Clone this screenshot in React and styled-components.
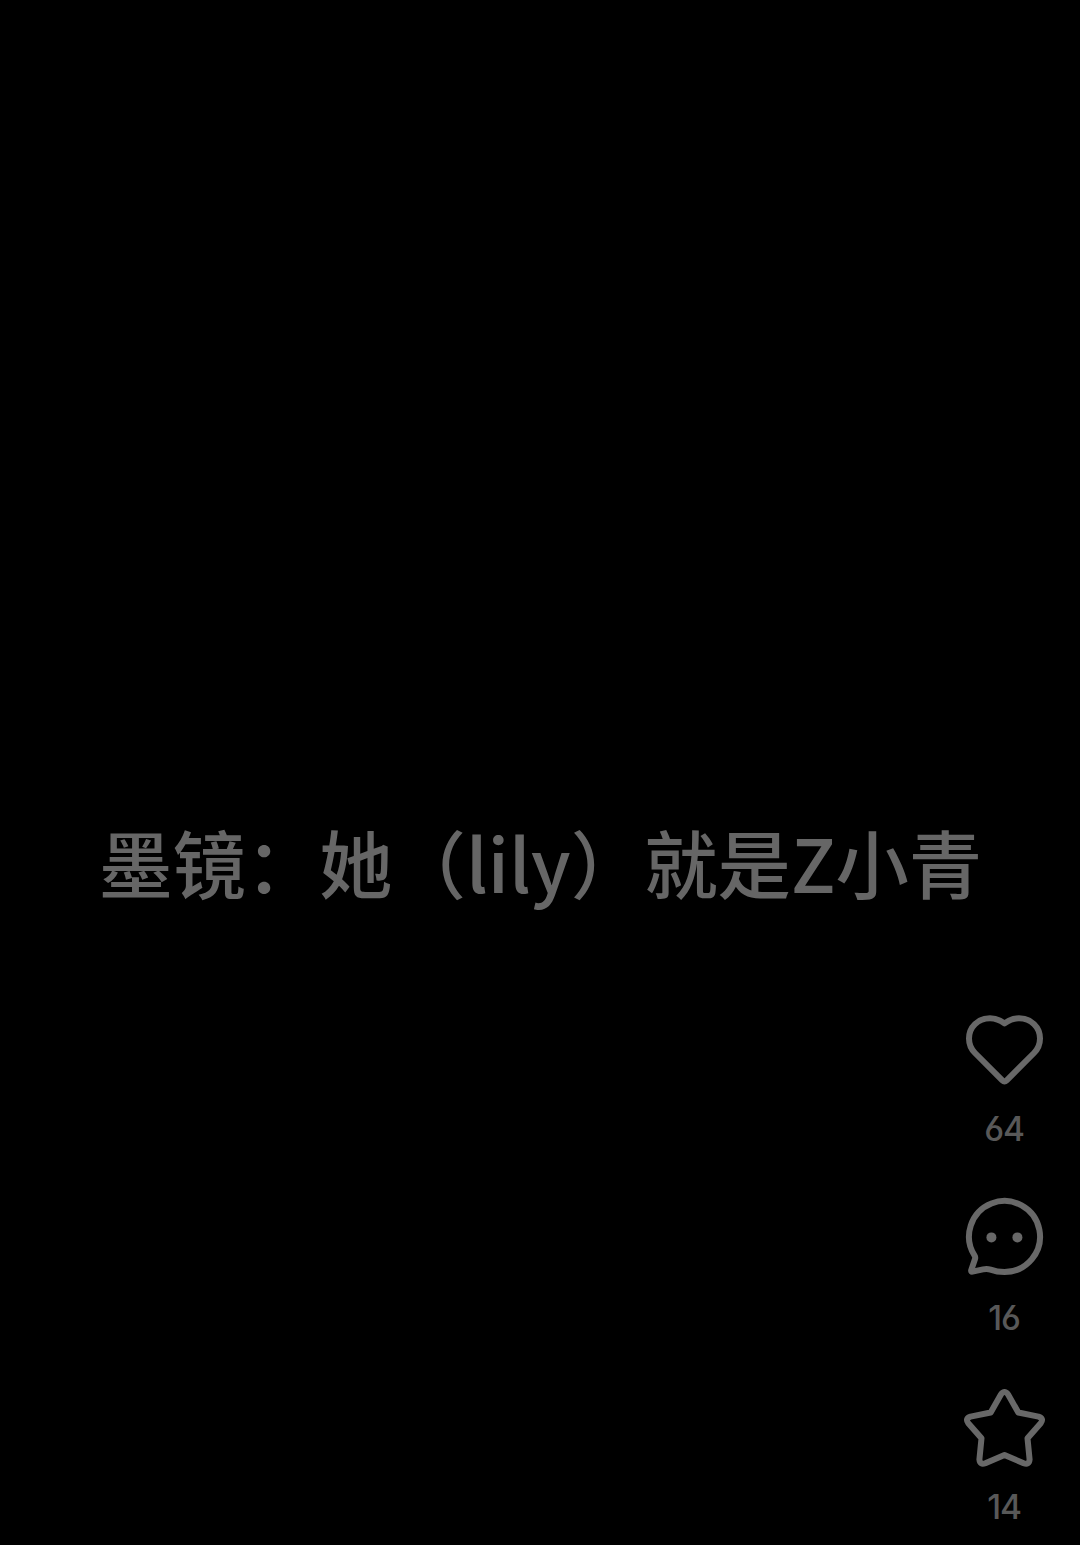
import React from 'react';
import styled, { createGlobalStyle } from 'styled-components';

const actions = [
  { name: 'like', count: '64', icon: <HeartIcon /> },
  { name: 'comment', count: '16', icon: <CommentIcon /> },
  { name: 'favorite', count: '14', icon: <StarIcon /> },
];

function HeartIcon() {
  return (
    <Icon viewBox="0 0 85 84">
      <path d="M42.5 17.4C38 14 33 12.2 28 12.2C16 12.2 7 21 7 32.5C7 38.5 9 43 13 47L40.3 74.3Q42.5 76.4 44.7 74.3L72 47C76 43 78 38.5 78 32.5C78 21 69 12.2 57 12.2C52 12.2 47 14 42.5 17.4Z" />
    </Icon>
  );
}

function CommentIcon() {
  return (
    <Icon viewBox="0 0 85 84">
      <path d="M42.5 77A35.5 35.5 0 1 0 12.6 60.6Q13.6 62.2 13 64L9.2 75.2Q8.8 76.9 10.5 76.6L21 74.4Q25 73.6 28.5 74.6Q35 77 42.5 77Z" />
      <Eye cx="29.4" cy="42.4" r="5" />
      <Eye cx="55.4" cy="42.4" r="5" />
    </Icon>
  );
}

function StarIcon() {
  return (
    <Icon viewBox="0 0 85 84">
      <path d="M38.9 10.5Q42.5 5.6 46.1 10.5L56.3 28.5L76.5 32.6Q82.2 34.4 78.7 39.2L65.5 54.3L67.6 75.5Q67 81.3 61.7 79.2L42.5 71L23.3 79.2Q18 81.3 17.4 75.5L19.5 54.3L6.3 39.2Q2.8 34.4 8.5 32.6L28.7 28.5Z" />
    </Icon>
  );
}

const App = () => {
  return (
    <Screen>
      <GlobalStyle />
      <Caption>墨镜：她（lily）就是Z小青</Caption>
      <Rail>
        {actions.map((action) => (
          <Action key={action.name} aria-label={action.name}>
            {action.icon}
            <Count>{action.count}</Count>
          </Action>
        ))}
      </Rail>
    </Screen>
  );
};

const GlobalStyle = createGlobalStyle`
  body {
    margin: 0;
    background: #000;
  }
`;

const Screen = styled.main`
  box-sizing: border-box;
  display: flex;
  flex-direction: column;
  height: 1545px;
  padding: 807px 33px 21px 0;
  background: #000;
  overflow: hidden;
`;

const Caption = styled.h1`
  margin: 0 0 0 99px;
  font-family: 'Noto Sans CJK SC', sans-serif;
  font-size: 73.4px;
  font-weight: 500;
  line-height: 108px;
  white-space: nowrap;
  color: #666;
`;

const Rail = styled.div`
  display: flex;
  flex-direction: column;
  align-items: center;
  align-self: flex-end;
  gap: 49px;
  width: 85px;
  margin-top: auto;
`;

const Action = styled.button`
  display: flex;
  flex-direction: column;
  align-items: center;
  width: 85px;
  height: 140px;
  padding: 0;
  border: 0;
  background: none;
  cursor: pointer;
`;

const Icon = styled.svg`
  display: block;
  flex: none;
  width: 85px;
  height: 84px;
  fill: none;
  stroke: #686868;
  stroke-width: 6;
  stroke-linejoin: round;
`;

const Eye = styled.circle`
  fill: #686868;
  stroke: none;
`;

const Count = styled.span`
  margin-top: 19px;
  font-family: Inter, sans-serif;
  font-size: 33.5px;
  font-weight: 500;
  font-feature-settings: 'cv03';
  line-height: 40px;
  letter-spacing: -1.2px;
  text-indent: -1px;
  color: #585858;
`;

export default App;
